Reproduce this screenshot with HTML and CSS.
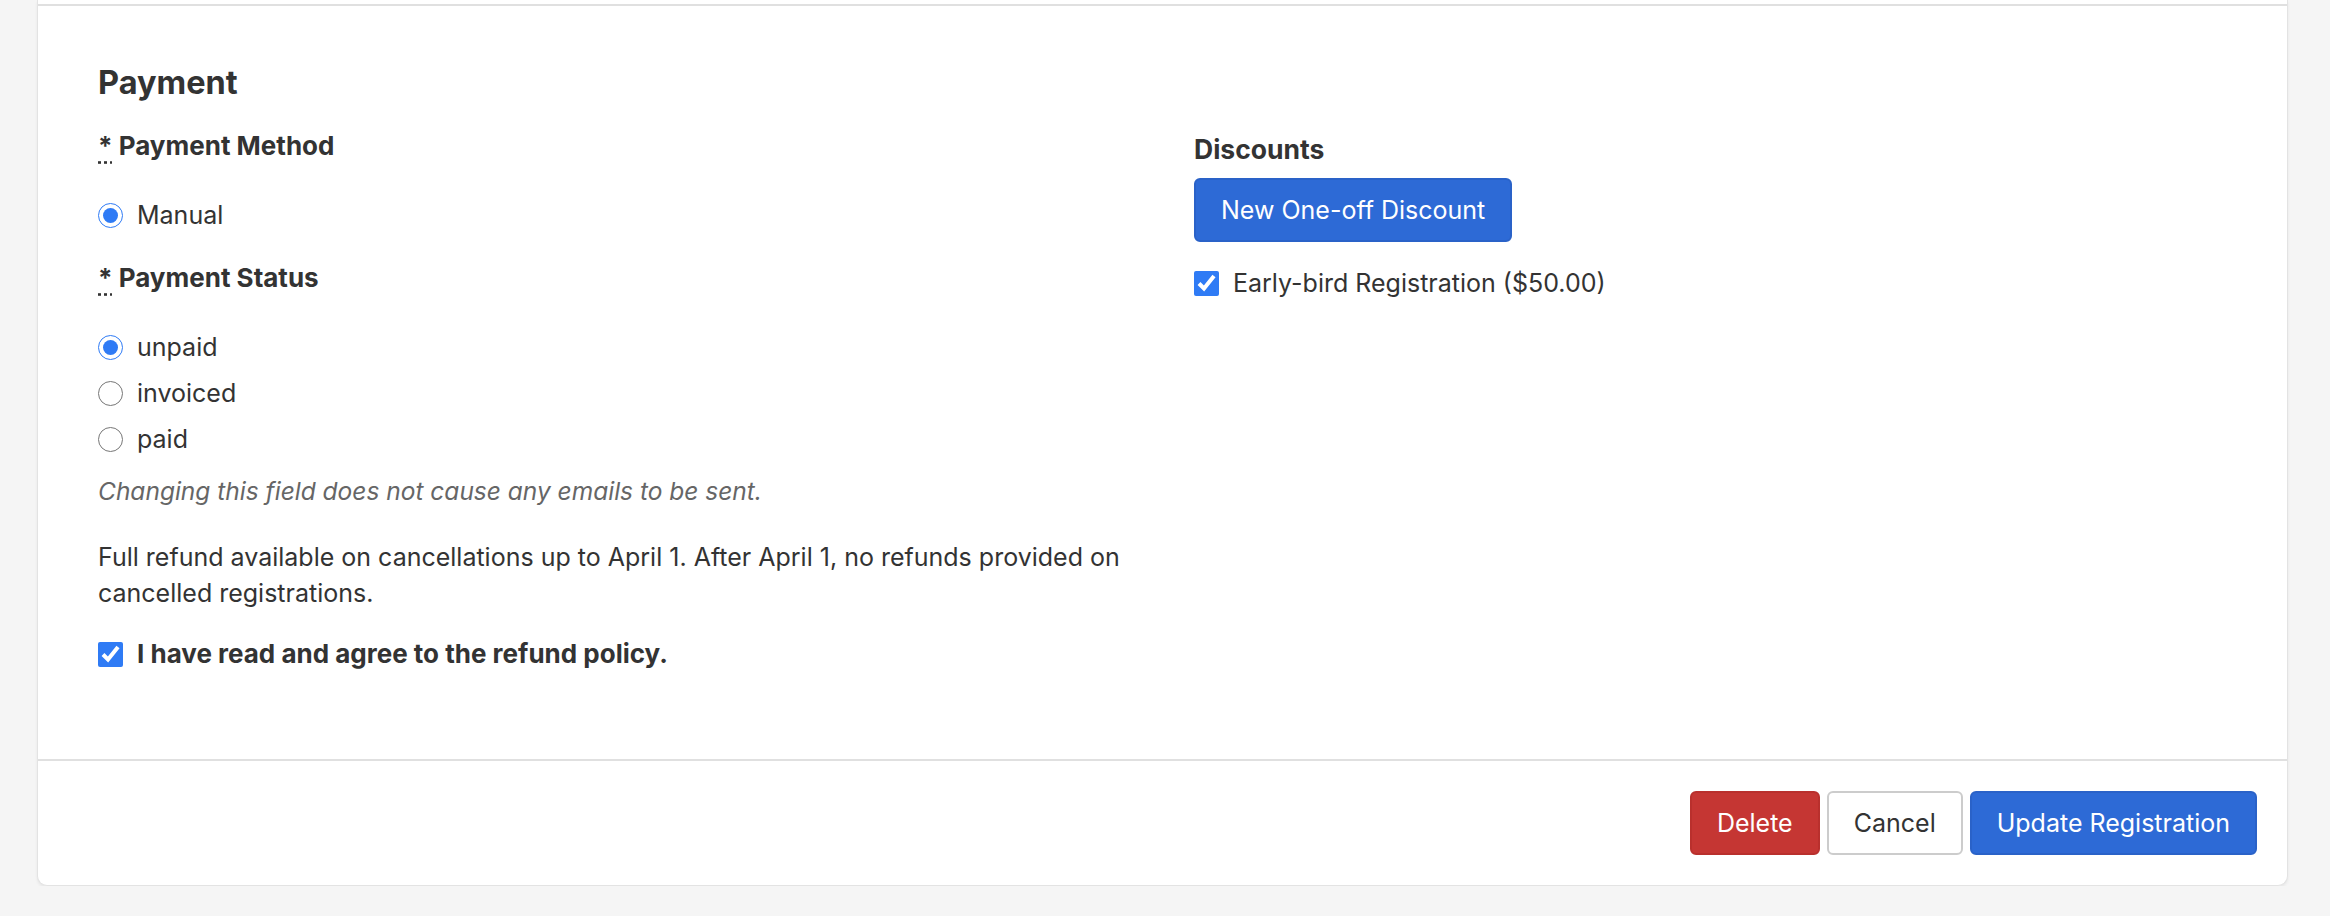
FILE: index.html
```html
<!DOCTYPE html>
<html lang="en">
<head>
    <meta charset="UTF-8">
    <meta name="viewport" content="width=device-width, initial-scale=1.0">
    <title>Edit Registration</title>
    <link rel="stylesheet" href="styles.css">
</head>
<body>

<form class="card">
  <div class="card-body">
    <h3 class="section-title">Payment</h3>

    <div class="columns">
      <div class="column">
        <div class="field">
          <label class="field-label"><abbr title="required">*</abbr> Payment Method</label>
          <div class="options">
            <label class="option"><input type="radio" name="method" checked> Manual</label>
          </div>
        </div>

        <div class="field">
          <label class="field-label"><abbr title="required">*</abbr> Payment Status</label>
          <div class="options">
            <label class="option"><input type="radio" name="status" checked> unpaid</label>
            <label class="option"><input type="radio" name="status"> invoiced</label>
            <label class="option"><input type="radio" name="status"> paid</label>
          </div>
          <p class="help">Changing this field does not cause any emails to be sent.</p>
        </div>

        <p class="policy">Full refund available on cancellations up to April 1. After April 1, no refunds provided on cancelled registrations.</p>
        <label class="option agree"><input type="checkbox" checked> I have read and agree to the refund policy.</label>
      </div>

      <div class="column">
        <div class="discounts-label">Discounts</div>
        <button type="button" class="btn btn-primary">New One-off Discount</button>
        <label class="option discount"><input type="checkbox" checked> Early-bird Registration ($50.00)</label>
      </div>
    </div>
  </div>

  <div class="card-footer">
    <button type="button" class="btn btn-danger">Delete</button>
    <button type="button" class="btn btn-default">Cancel</button>
    <button type="submit" class="btn btn-primary">Update Registration</button>
  </div>
</form>

</body>
</html>
```

FILE: styles.css
```css
body {
  margin: 0;
  background-color: #f5f5f5;
  font-family: Inter, "Noto Sans", sans-serif;
  font-size: 25px;
  line-height: 36px;
  color: #333;
}

.card {
  margin: 0 42px 0 37px;
  padding-top: 4px;
  background-color: #fff;
  border: 1.5px solid #e3e3e3;
  border-top: none;
  border-radius: 0 0 10px 10px;
  box-shadow: 0 2px 3px rgba(0,0,0,0.06);
}

.card-body {
  border-top: 2px solid #e0e0e0;
  padding: 59px 60px 87px 60px;
}

.section-title {
  margin: 0 0 27px 0;
  font-size: 32.5px;
  line-height: 36px;
  font-weight: 700;
}

.columns {
  display: grid;
  grid-template-columns: 1fr 1fr;
  gap: 63px;
}

.field-label,
.agree {
  font-size: 26px;
  font-weight: 700;
}

.discounts-label {
  font-size: 26.5px;
  font-weight: 700;
}

.field-label {
  display: block;
}

abbr {
  text-decoration: underline dotted;
  text-underline-offset: 6px;
}

.options {
  margin-top: 33px;
}

.option {
  display: flex;
  align-items: center;
  gap: 14px;
  height: 36px;
  margin-bottom: 10px;
}

.field + .field {
  margin-top: 27px;
}

input[type="radio"],
input[type="checkbox"] {
  width: 25px;
  height: 25px;
  margin: 0;
  accent-color: #2f7bf5;
}

.help {
  margin: 16px 0 0 0;
  font-size: 24.5px;
  font-style: italic;
  color: #666;
}

.policy {
  margin: 30px 0 0 0;
}

.agree {
  margin: 25px 0 0 0;
}

.discounts-label {
  margin-top: 3px;
}

.discount {
  margin-top: 23px;
}

.column > .btn {
  margin-top: 11px;
}

.btn {
  font-family: inherit;
  font-size: 25px;
  line-height: 36px;
  padding: 12px 25px;
  border: 2px solid transparent;
  border-radius: 6px;
  cursor: pointer;
}

.btn-primary {
  background-color: #2d6ad6;
  border-color: #2a62c8;
  color: #fff;
}

.btn-danger {
  background-color: #c53633;
  border-color: #b9302d;
  color: #fff;
}

.btn-default {
  background-color: #fff;
  border-color: #ccc;
  color: #333;
}

.card-footer {
  display: flex;
  justify-content: flex-end;
  gap: 7px;
  padding: 30px;
  border-top: 2px solid #e0e0e0;
}
```
